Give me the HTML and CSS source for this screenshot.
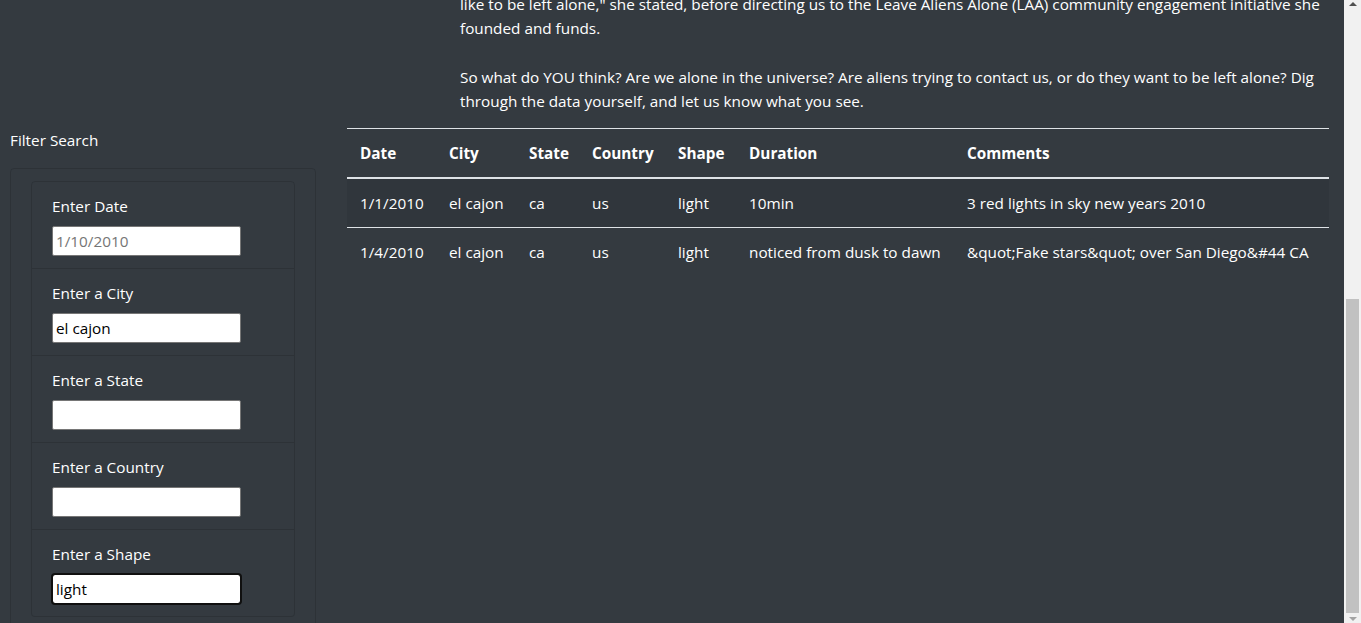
FILE: index.html
```html
<!DOCTYPE html>
<html lang="en">
<head>
<meta charset="utf-8">
<title>UFO Sightings</title>
<link rel="stylesheet" href="styles.css">
</head>
<body>
<div class="page">
  <div class="intro">
    <p class="intro-text">like to be left alone," she stated, before directing us to the Leave Aliens Alone (LAA) community engagement initiative she<br>founded and funds.</p>
    <p class="intro-text">So what do YOU think? Are we alone in the universe? Are aliens trying to contact us, or do they want to be left alone? Dig<br>through the data yourself, and let us know what you see.</p>
  </div>
  <div class="main-row">
    <aside class="sidebar">
      <h5 class="filter-title">Filter Search</h5>
      <form class="filter-card">
        <ul class="filter-list">
          <li class="filter-item">
            <label class="filter-label" for="datetime">Enter Date</label>
            <input class="filter-input" id="datetime" type="text" placeholder="1/10/2010">
          </li>
          <li class="filter-item">
            <label class="filter-label" for="city">Enter a City</label>
            <input class="filter-input" id="city" type="text" value="el cajon">
          </li>
          <li class="filter-item">
            <label class="filter-label" for="state">Enter a State</label>
            <input class="filter-input" id="state" type="text">
          </li>
          <li class="filter-item">
            <label class="filter-label" for="country">Enter a Country</label>
            <input class="filter-input" id="country" type="text">
          </li>
          <li class="filter-item">
            <label class="filter-label" for="shape">Enter a Shape</label>
            <input class="filter-input is-focused" id="shape" type="text" value="light">
          </li>
        </ul>
      </form>
    </aside>
    <main class="results">
      <table class="ufo-table">
        <colgroup>
          <col class="c-date"><col class="c-city"><col class="c-state"><col class="c-country"><col class="c-shape"><col class="c-duration"><col class="c-comments">
        </colgroup>
        <thead>
          <tr><th>Date</th><th>City</th><th>State</th><th>Country</th><th>Shape</th><th>Duration</th><th>Comments</th></tr>
        </thead>
        <tbody>
          <tr class="stripe"><td>1/1/2010</td><td>el cajon</td><td>ca</td><td>us</td><td>light</td><td>10min</td><td>3 red lights in sky new years 2010</td></tr>
          <tr><td>1/4/2010</td><td>el cajon</td><td>ca</td><td>us</td><td>light</td><td>noticed from dusk to dawn</td><td>&amp;quot;Fake stars&amp;quot; over San Diego&amp;#44 CA</td></tr>
        </tbody>
      </table>
    </main>
  </div>
</div>
<div class="scrollbar">
  <span class="sb-up"></span>
  <div class="sb-track"><div class="sb-thumb"></div></div>
  <span class="sb-down"></span>
</div>
</body>
</html>
```
FILE: styles.css
```css
html, body {
  margin: 0;
  padding: 0;
  height: 623px;
  overflow: hidden;
}
body {
  display: flex;
  background: #343a40;
  color: #fff;
  font-family: "Open Sans", "Noto Sans", Arial, sans-serif;
  font-size: 15.3px;
  line-height: 24px;
}
.page {
  flex: 1;
  min-width: 0;
  overflow: hidden;
}
.intro {
  margin: -8px 15px 15px 460px;
}
.intro-text {
  margin: 0;
  white-space: nowrap;
}
.intro-text + .intro-text {
  margin-top: 25px;
}
.main-row {
  display: flex;
  align-items: flex-start;
}
.sidebar {
  width: 337px;
  padding-left: 10px;
  flex: none;
}
.filter-title {
  margin: 0 0 16px;
  font-size: 15.3px;
  font-weight: 400;
  line-height: 24px;
}
.filter-card {
  width: 306px;
  box-sizing: border-box;
  border: 1px solid rgba(0, 0, 0, 0.13);
  border-radius: 4px;
  padding: 12px 20px 40px;
  margin: 0;
}
.filter-list {
  list-style: none;
  margin: 0;
  padding: 0;
  border-radius: 4px;
}
.filter-item {
  border: 1px solid rgba(0, 0, 0, 0.13);
  padding: 12px 20px;
}
.filter-item + .filter-item {
  border-top: 0;
}
.filter-item:first-child {
  border-radius: 4px 4px 0 0;
}
.filter-item:last-child {
  border-radius: 0 0 4px 4px;
}
.filter-label {
  display: block;
  margin-bottom: 8px;
  line-height: 24px;
}
.filter-input {
  display: block;
  width: 189px;
  height: 30px;
  box-sizing: border-box;
  margin: 0;
  padding: 0 3px;
  border: 1px solid #767676;
  border-radius: 2px;
  background: #fff;
  color: #000;
  font-family: "Open Sans", "Noto Sans", Arial, sans-serif;
  font-size: 15.3px;
}
.filter-input::placeholder {
  color: #757575;
}
.filter-input.is-focused {
  outline: 2px solid #101010;
  outline-offset: -1px;
  border-radius: 3px;
}
.results {
  flex: 1;
  padding-right: 15px;
  min-width: 0;
}
.ufo-table {
  width: 982px;
  table-layout: fixed;
  border-collapse: collapse;
  border-top: 1px solid #dee2e6;
}
.c-date { width: 90px; }
.c-city { width: 80px; }
.c-state { width: 63px; }
.c-country { width: 86px; }
.c-shape { width: 71px; }
.c-duration { width: 218px; }
.c-comments { width: 374px; }
.ufo-table th,
.ufo-table td {
  padding: 12px;
  text-align: left;
  white-space: nowrap;
  line-height: 24px;
  vertical-align: top;
}
.ufo-table th:first-child,
.ufo-table td:first-child {
  padding-left: 13px;
}
.ufo-table th {
  font-weight: 700;
  border-bottom: 2px solid #dee2e6;
}
.ufo-table tbody tr + tr td {
  border-top: 1px solid #dee2e6;
}
.ufo-table .stripe {
  background: rgba(0, 0, 0, 0.06);
}
.scrollbar {
  width: 17px;
  flex: none;
  background: #f1f1f1;
  display: flex;
  flex-direction: column;
  align-items: center;
}
.sb-up {
  margin-top: 2px;
  width: 0;
  height: 0;
  border-left: 4px solid transparent;
  border-right: 4px solid transparent;
  border-bottom: 4px solid #505050;
}
.sb-track {
  flex: 1;
  align-self: stretch;
  display: flex;
  flex-direction: column;
  justify-content: flex-end;
  align-items: center;
}
.sb-thumb {
  width: 13px;
  height: 314px;
  background: #c1c1c1;
}
.sb-down {
  margin: 4px 0 2px;
  width: 0;
  height: 0;
  border-left: 4px solid transparent;
  border-right: 4px solid transparent;
  border-top: 4px solid #a3a3a3;
}
```
